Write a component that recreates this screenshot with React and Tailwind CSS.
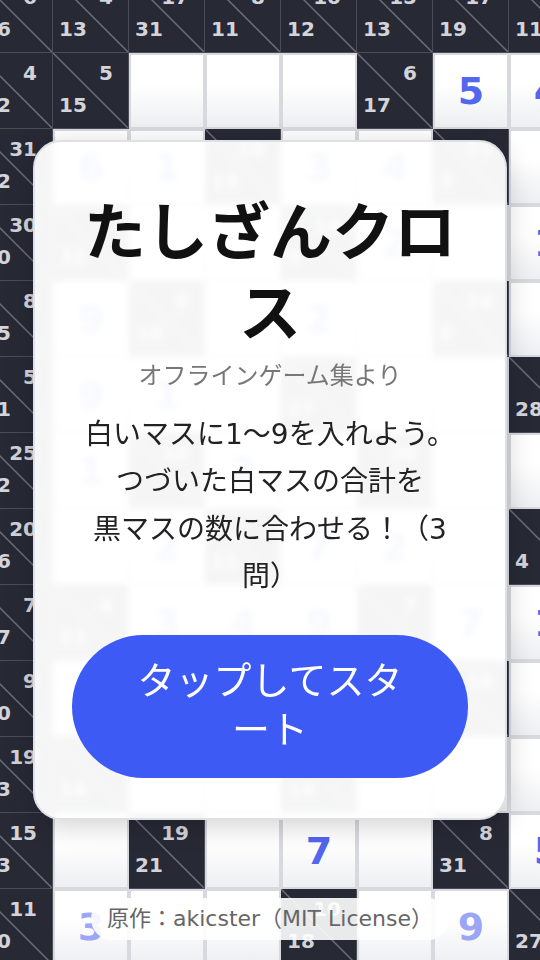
import React from 'react';

const D = (a, b) => ({ k: 'd', a, b });
const W = (n = '', tone = 'blue') => ({ k: 'w', n, tone });

const board = [
  [D('6', '16'), D('4', '13'), D('17', '31'), D('8', '11'), D('10', '12'), D('15', '13'), D('17', '19'), D('8', '11')],
  [D('4', '12'), D('5', '15'), W(), W(), W(), D('6', '17'), W('5'), W('4')],
  [D('31', '22'), W('6'), W('1'), D('10', '19'), W('3'), W('4'), D('21', '3'), W()],
  [D('30', '20'), D('', '32'), W(), W(), D('14', '9'), W('2'), W(), W('1')],
  [D('8', '15'), W('9'), D('8', '16'), W(), W('2'), W(), D('24', '6'), W()],
  [D('5', '21'), W('9'), W('1'), W(), D('', '27'), W(), W(), D('', '28')],
  [D('25', '12'), W('1'), D('10', ''), W('2'), W(), D('20', ''), W(), W()],
  [D('20', '16'), W(), W('2'), D('', '21'), W('7'), W('2'), W(), D('', '4')],
  [D('7', '17'), D('4', '23'), W('3'), W('4'), W('9'), D('7', ''), W('7'), W('1')],
  [D('9', '10'), W(), W(), W(), W(), W(), D('10', ''), W()],
  [D('19', '23'), D('', '14'), W(), W(), D('', '14'), W(), W(), W()],
  [D('15', '13'), W(), D('19', '21'), W(), W('7'), W(), D('8', '31'), W('5')],
  [D('11', '20'), W('3', 'light'), W(), W(), D('10', '18'), W(), W('9', 'light'), D('', '27')],
];

const Cell = ({ c }) => {
  if (c.k === 'd') {
    return (
      <div className="relative w-[76px] h-[76px] bg-[#272935] border-r border-b border-[#4a4c57]">
        <svg className="absolute inset-0 w-full h-full" viewBox="0 0 76 76" preserveAspectRatio="none">
          <line x1="0" y1="0" x2="76" y2="76" stroke="#6d6f7b" strokeWidth="1.4" />
        </svg>
        <span className="absolute top-[10px] right-[15px] text-[20px] leading-none font-bold text-[#d3d4da]">{c.a}</span>
        <span className="absolute bottom-[13px] left-[6px] text-[20px] leading-none font-bold text-[#d3d4da]">{c.b}</span>
      </div>
    );
  }
  return (
    <div className="w-[76px] h-[76px] border-2 border-[#d8d9de] bg-linear-to-b from-white from-40% to-[#eeeff2] flex items-center justify-center">
      <span className={c.tone === 'light' ? 'text-[38px] font-bold leading-none text-[#9ba6f7]' : 'text-[38px] font-bold leading-none text-[#5266ee]'}>
        {c.n}
      </span>
    </div>
  );
};

export default function App() {
  return (
    <div className="relative w-[540px] h-[960px] overflow-hidden bg-[#272935] font-['DejaVu_Sans','Noto_Sans_CJK_JP',sans-serif]">
      <div className="grid grid-cols-[repeat(8,76px)] auto-rows-[76px] -ml-[23px] -mt-[23px]">
        {board.map((row, r) => row.map((c, i) => <Cell key={r + '-' + i} c={c} />))}
      </div>

      <div className="absolute inset-0 flex items-center justify-center">
        <div className="w-[474px] rounded-[28px] bg-white/[0.955] backdrop-blur-[3px] border-2 border-[#dfe0e5] shadow-[0_6px_28px_rgba(0,0,0,0.18)] px-[37px] pt-[46px] pb-[40px] text-center">
          <h1 className="text-[62px] leading-[1.3] font-bold text-[#111] font-['Noto_Sans_CJK_JP',sans-serif]">
            たしざんクロス
          </h1>
          <p className="mt-2 text-2xl leading-9 text-[#777]">オフラインゲーム集より</p>
          <p className="mt-[17px] px-[10px] text-[28px] leading-[1.7] text-[#222]">
            白いマスに1〜9を入れよう。
            <br />
            つづいた白マスの合計を
            <br />
            黒マスの数に合わせる！（3問）
          </p>
          <button className="mt-[34px] w-full rounded-full bg-[#3d5af5] text-white text-[38px] leading-[1.3] py-[22px] px-[50px]">
            タップしてスタート
          </button>
        </div>
      </div>

      <div className="absolute bottom-[20px] left-1/2 -translate-x-1/2 whitespace-nowrap rounded-full bg-white/90 px-4 py-[5px] text-[22px] leading-[1.45] text-[#666]">
        原作：akicster（MIT License）
      </div>
    </div>
  );
}
